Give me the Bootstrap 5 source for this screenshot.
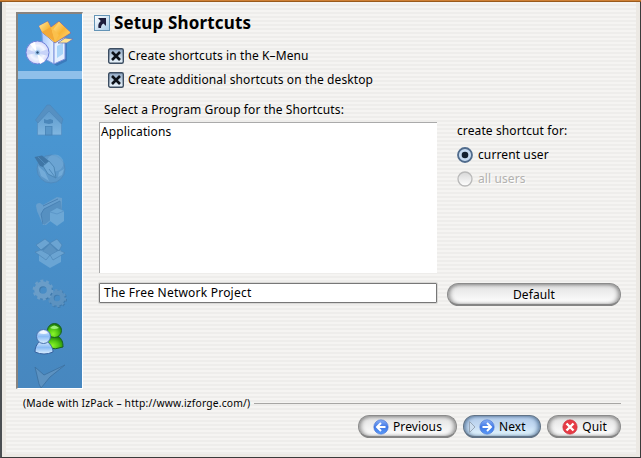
<!DOCTYPE html>
<html lang="en">
<head>
<meta charset="utf-8">
<meta name="viewport" content="width=device-width, initial-scale=1">
<title>Setup Shortcuts</title>
<link href="https://cdn.jsdelivr.net/npm/bootstrap@5.3.0/dist/css/bootstrap.min.css" rel="stylesheet">
<style>
body{font:12px/16px "Noto Sans","Open Sans",sans-serif;letter-spacing:.11px;color:#000;background:#efebe7}
.win{width:641px;height:458px;border:solid #3b3b3b;border-width:0 1px 1px 2px;border-left-color:#4a4e52;background:#ece9e4}
.titleedge{height:2px;background:linear-gradient(#cf8136 50%,#9a5a1c 50%);margin-left:-2px;margin-right:-1px}
.pane{height:452px;margin:0 4px;padding:10px 15px 0 10px;background:repeating-linear-gradient(#f5f4f2 0 2px,#eeedeb 2px 4px)}
.main-row{height:377px}
.side{width:67px;height:377px;border:solid #88837f;border-width:2px 1px 1px 2px;border-right-color:#fff;border-bottom-color:#fff;background:linear-gradient(#4596d5,#4996d2 30%,#4787bf)}
.side svg{display:block;flex:none}
.band{height:8px;flex:none;background:#8fc0ea}
.steps{padding-top:20px}
.form-side{padding-left:10px}
.fields{padding-left:6px}
.ttl{font-size:17px;line-height:22px;font-weight:700;letter-spacing:.15px;margin-left:4px}
.opts{margin:10px 0 0 9px}
.opt{height:24px}
.opt span{margin-left:4px}
.cap{margin:10px 0 0 5px}
.lst{width:338px;height:151px;background:#fff;border:solid #aaa;border-width:1px 0 0 1px;padding:1px;margin-top:4px}
.fld{width:338px;height:20px;background:#fff;border:1px solid #777;box-shadow:0 0 0 1px #d9d8d6;border-radius:1px;padding:1px 4px;letter-spacing:.22px}
.fldrow{margin-top:10px;gap:10px}
.scope{margin-left:20px;padding-top:5px}
.rad{margin-top:8px;height:16px}
.rad span{margin-left:5px}
.dis{color:#b2b1af;text-shadow:1px 1px #fff}
.pill{height:23px;border:1px solid #8b8b8b;border-bottom:2px solid #858585;border-radius:12px;padding:1px 0 0;line-height:18px;color:#000;background:linear-gradient(#cdcdcd,#e8e8e8 25%,#f0f0f0 50%,#fff);box-shadow:inset 3px 0 4px -1px #999,inset -3px 0 4px -1px #999,inset 0 1px 2px #aaa;display:flex;align-items:center;justify-content:center;letter-spacing:.11px}
.pill.hot{border-color:#617386;background:linear-gradient(#b1cae8,#c5dbf3 50%,#e6f8ff);box-shadow:inset 3px 0 4px -1px #6584a7,inset -3px 0 4px -1px #6584a7,inset 0 1px 2px #8aa4c2}
.pill svg+span{margin-left:4px}
.pill.def{width:174px}
.pill.prev{width:99px}
.pill.next{width:78px;justify-content:flex-start;padding-left:5px}
.next .tri{margin-right:3px}
.pill.quit{width:74px;padding-left:1px}
.credit{height:16px;margin-top:6px;margin-left:7px;font-size:10.3px;letter-spacing:.19px}
.rule{height:1px;background:#a7a6a4;margin-left:4px}
.acts{gap:6px;margin-top:4px}
</style>
<script src="https://cdn.jsdelivr.net/npm/bootstrap@5.3.0/dist/js/bootstrap.bundle.min.js"></script>
</head>
<body class="overflow-hidden">
<div class="win">
<div class="titleedge"></div>
<div class="pane">
<div class="main-row d-flex">
 <div class="side d-flex flex-column overflow-hidden">
  <svg width="64" height="57" viewBox="18 14 64 57">
   <defs>
    <linearGradient id="gold" x1="0" y1="0" x2="1" y2="1"><stop stop-color="#ffe9a0"/><stop offset=".5" stop-color="#f9b535"/><stop offset="1" stop-color="#ffdc86"/></linearGradient>
    <linearGradient id="ice"><stop stop-color="#a9c8fb"/><stop offset="1" stop-color="#eaf3ff"/></linearGradient>
    <radialGradient id="disc"><stop stop-color="#b9d2f5"/><stop offset=".6" stop-color="#f2f5ff"/><stop offset="1" stop-color="#d5d8fa"/></radialGradient>
   </defs>
   <path d="M43 34 54 43 66 40V60L56 65 43 58Z" fill="#2f5fa5" opacity=".5" transform="translate(1 1)"/>
   <path d="M42 32 54 42V64L43 58Z" fill="url(#ice)" stroke="#7d9ce4"/>
   <path d="M54 42 65 37V59L54 64Z" fill="#e4efff" stroke="#7d8fdb"/>
   <path d="M57 46 63 43V54L57 58Z" fill="#a9d4f8"/>
   <path d="M39 26 48 21 51 27 59 21 71 33 55 43 42 32Z" fill="#fbbd42" stroke="#776fae" stroke-width=".8"/>
   <path d="M39 26 47.500 21.500 52 32 54 42 42 32Z" fill="url(#gold)"/>
   <path d="M52 31 59 22 70 32 55 42Z" fill="url(#gold)"/>
   <path d="M42 32 51 27 55 42Z" fill="#f3a936"/><path d="M51 27 59 35 55 42Z" fill="#fbc04c"/>
   <path d="M58 43 65 38 73 39 67 43Z" fill="#ffe490" stroke="#6a76b8" stroke-width=".8"/>
   <circle cx="37.500" cy="52.500" r="11.500" fill="url(#disc)" stroke="#6c7fd8"/>
   <path d="M37 53 30 44 35 42ZM37 53 45 61 40 64Z" fill="#fff"/>
   <path d="M37 53 27 49V55ZM37 53 48 49V56Z" fill="#c7d3f8"/>
   <circle cx="37.500" cy="52.500" r="2.600" fill="#a5cbef"/><circle cx="37.500" cy="52.500" r="1.200" fill="#2c4e78"/>
  </svg>
  <div class="band"></div>
  <div class="steps">
   <svg width="64" height="44" viewBox="18 99 64 44">
    <defs><linearGradient id="wall" x2="0" y2="1"><stop stop-color="#5795c9"/><stop offset="1" stop-color="#80b6e0"/></linearGradient></defs>
    <path d="M37.500 118 49 107 61.500 118V135H37.500Z" fill="url(#wall)" stroke="#5590c4" stroke-width=".8"/>
    <path d="M35.500 120 47 105H50L63 119 61.500 124 49 111 38 123Z" fill="#5690c2" stroke="#4a85b8" stroke-width=".6"/>
    <rect x="45.500" y="126.500" width="6.500" height="8.500" fill="#5a97c9" stroke="#4883b5" stroke-width=".8"/>
    <path d="M44 119 47 120 50 119 53 120V123L49 124 44 123Z" fill="#4b87ba"/>
   </svg>
   <svg width="64" height="44" viewBox="18 143 64 44">
    <circle cx="51" cy="169" r="14" fill="#5c98ca" stroke="#4f8bbf"/>
    <circle cx="55" cy="163" r="8.500" fill="#78afda" opacity=".55"/>
    <path d="M38 166 41 176 49 181 45 172ZM59 172 64 169 62 175 58 177Z" fill="#73abd8"/>
    <path d="M34.500 157 42 155.500 49 161 43 167 40 166Z" fill="#3f76a6"/>
    <path d="M43 166 49 161 54 167 56 178 48 174Z" fill="#70a9d7" stroke="#457fac" stroke-width=".8"/>
    <path d="M49 169 55 177M38 157 45 164" stroke="#4f8abb"/>
   </svg>
   <svg width="64" height="44" viewBox="18 187 64 44">
    <path d="M36 206Q36 203 40 203L43 205 57 197 62 198V211L46 225 43 225 37 211Z" fill="#679fce"/>
    <path d="M41 214 44 209 61 201 62 211 44 225Z" fill="#5690c1"/>
    <path d="M43 224 41 214 44 209 60 201M43 206 58 199" fill="none" stroke="#417aad" stroke-width=".8"/>
    <path d="M50 212 57 208 64 211V221L57 226 50 221Z" fill="#6ca7d5"/><path d="M50 212 57 214 64 211" fill="none" stroke="#5c97c9"/>
   </svg>
   <svg width="64" height="44" viewBox="18 231 64 44">
    <path d="M39 250H61V262L50 268 39 261Z" fill="#6aa5d4"/>
    <path d="M41 249 50 243 60 250 50 256Z" fill="#4d87b9"/>
    <path d="M36 245 45 239 50 243 41 250ZM50 243 57 239 62 245 59 251ZM35 252 41 250 50 255 46 260ZM59 250 65 253 53 260 50 255Z" fill="#6ba4d2" stroke="#4981b2" stroke-width=".6"/>
    <path d="M43 251 50 244 57 251 50 255Z" fill="#5b93c2"/>
   </svg>
   <svg width="64" height="44" viewBox="18 275 64 44">
    <g fill="none" stroke="#417bad"><circle cx="58" cy="299" r="5.500" stroke-width="4"/><circle cx="58" cy="299" r="8" stroke-width="2" stroke-dasharray="2.600 2.430"/></g>
    <g fill="none" stroke="#5c92c0"><circle cx="57" cy="298" r="5.500" stroke-width="4.500"/><circle cx="57" cy="298" r="8" stroke-width="2.200" stroke-dasharray="2.600 2.430"/></g>
    <g fill="none" stroke="#417bad"><circle cx="44" cy="291" r="6.300" stroke-width="5"/></g>
    <g fill="none" stroke="#6a9dc8"><circle cx="43" cy="290" r="6.300" stroke-width="5"/><circle cx="43" cy="290" r="9.200" stroke-width="2.400" stroke-dasharray="3 2.780"/></g>
   </svg>
   <svg width="64" height="44" viewBox="18 319 64 44">
    <defs>
     <radialGradient id="grn" cx=".4" cy=".75" r=".75"><stop stop-color="#8cf62a"/><stop offset=".5" stop-color="#52c714"/><stop offset="1" stop-color="#177608"/></radialGradient>
     <linearGradient id="blu" x2="0" y2="1"><stop stop-color="#e1efff"/><stop offset=".5" stop-color="#8cbdf5"/><stop offset="1" stop-color="#dcefff"/></linearGradient>
    </defs>
    <path d="M45 345C45 339 49 337 50 336H58C62 339 63 342 63 347Q56 350 47 348Z" fill="url(#grn)" stroke="#185f24"/>
    <circle cx="54.500" cy="330.500" r="7" fill="url(#grn)" stroke="#185f24"/>
    <path d="M50 328Q54 323 59 328Q54 330 50 328Z" fill="#9ded7a"/>
    <path d="M35 352C35 346 38 343 40 341H47C51 345 53 348 53 352Q44 356 35 352Z" fill="url(#blu)" stroke="#37629f"/>
    <circle cx="43.500" cy="336.500" r="7" fill="url(#blu)" stroke="#4570ae"/>
    <path d="M39 333Q43 328 48 333Q44 335 39 333Z" fill="#fff" opacity=".8"/>
   </svg>
   <svg width="64" height="26" viewBox="18 363 64 26">
    <path d="M35 367 44 375 65 365 50 377 41 388 39 384Z" fill="#5c92c1" stroke="#3d73a3" stroke-width=".9"/>
   </svg>
  </div>
 </div>
 <div class="form-side flex-grow-1">
  <div class="d-flex align-items-center">
   <svg width="17" height="22" viewBox="0 0 17 22"><defs><linearGradient id="tile" x2="1" y2="1"><stop stop-color="#fff"/><stop offset="1" stop-color="#a7cbe8"/></linearGradient></defs><rect x="1.500" y="3.500" width="15" height="15" fill="url(#tile)" stroke="#6494b6"/><path d="M5 6H13V14L10.500 11.500Q8 12.500 8 16H5.500Q4.500 11.500 7.800 9Z" fill="#1d1d3c"/></svg>
   <span class="ttl">Setup Shortcuts</span>
  </div>
  <div class="fields">
   <div class="opts">
    <div class="opt d-flex align-items-center">
     <svg width="16" height="16" viewBox="0 0 16 16"><defs><linearGradient id="chk" x2="0" y2="1"><stop stop-color="#8fa7c3"/><stop offset="1" stop-color="#eef8ff"/></linearGradient></defs><rect x=".7" y=".7" width="14.600" height="14.600" rx="1.500" fill="url(#chk)" stroke="#3c4d61" stroke-width="1.400"/><path d="M4 4 12 12M12 4 4 12" stroke="#0d1219" stroke-width="2.600"/></svg>
     <span>Create shortcuts in the K–Menu</span>
    </div>
    <div class="opt d-flex align-items-center">
     <svg width="16" height="16" viewBox="0 0 16 16"><rect x=".7" y=".7" width="14.600" height="14.600" rx="1.500" fill="url(#chk)" stroke="#3c4d61" stroke-width="1.400"/><path d="M4 4 12 12M12 4 4 12" stroke="#0d1219" stroke-width="2.600"/></svg>
     <span>Create additional shortcuts on the desktop</span>
    </div>
   </div>
   <div class="cap">Select a Program Group for the Shortcuts:</div>
   <div class="d-flex">
    <div class="lst">Applications</div>
    <div class="scope">
     <div>create shortcut for:</div>
     <div class="rad d-flex align-items-center"><svg width="16" height="16" viewBox="0 0 16 16"><circle cx="8" cy="8" r="7" fill="#c6daf0" stroke="#506b8c" stroke-width="1.800"/><circle cx="8" cy="8" r="3.300" fill="#13202f"/></svg><span>current user</span></div>
     <div class="rad d-flex align-items-center"><svg width="16" height="16" viewBox="0 0 16 16"><defs><linearGradient id="off" x2="0" y2="1"><stop stop-color="#d7d7d7"/><stop offset="1" stop-color="#fff"/></linearGradient></defs><circle cx="8" cy="8" r="7" fill="url(#off)" stroke="#b9b9b9" stroke-width="1.300"/></svg><span class="dis">all users</span></div>
    </div>
   </div>
   <div class="fldrow d-flex align-items-start">
    <div class="fld">The Free Network Project</div>
    <button class="pill def" type="button">Default</button>
   </div>
  </div>
 </div>
</div>
<div class="credit d-flex align-items-center"><span class="text-nowrap">(Made with IzPack – http://www.izforge.com/)</span><div class="rule flex-grow-1"></div></div>
<div class="acts d-flex justify-content-end">
 <button class="pill prev" type="button"><svg width="16" height="16" viewBox="0 0 16 16"><defs><linearGradient id="orb" x2="0" y2="1"><stop stop-color="#89aff5"/><stop offset=".5" stop-color="#3f77e6"/><stop offset="1" stop-color="#5a9bf8"/></linearGradient></defs><circle cx="8" cy="8" r="7.200" fill="url(#orb)" stroke="#4471d0" stroke-width=".6"/><path d="M12.500 8H4.500M8 4 4 8 8 12" fill="none" stroke="#fff" stroke-width="2"/></svg><span>Previous</span></button>
 <button class="pill hot next" type="button"><svg class="tri" width="7" height="12" viewBox="0 0 7 12"><path d="M.5 .5V11.500L6 6Z" fill="#cddff0" stroke="#98a7b8"/></svg><svg width="16" height="16" viewBox="0 0 16 16"><circle cx="8" cy="8" r="7.200" fill="url(#orb)" stroke="#4471d0" stroke-width=".6"/><path d="M3.500 8H11.500M8 4 12 8 8 12" fill="none" stroke="#fff" stroke-width="2"/></svg><span>Next</span></button>
 <button class="pill quit" type="button"><svg width="16" height="16" viewBox="0 0 16 16"><circle cx="8" cy="8" r="7.200" fill="#e63b45" stroke="#c92e3b" stroke-width=".6"/><path d="M4.500 4.500 11.500 11.500M11.500 4.500 4.500 11.500" stroke="#fff" stroke-width="2.400"/></svg><span>Quit</span></button>
</div>
</div>
</div>
</body>
</html>
